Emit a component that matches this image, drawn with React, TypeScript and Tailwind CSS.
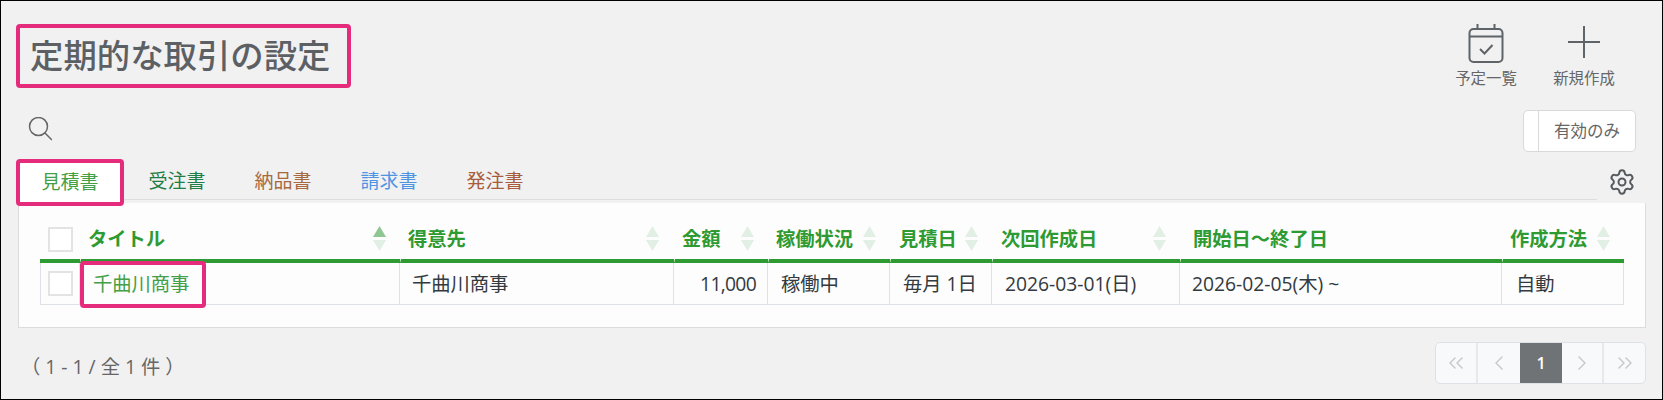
import { ChevronLeft, ChevronRight, ChevronsLeft, ChevronsRight, Settings } from "lucide-react";

const font = { fontFamily: '"Open Sans","Noto Sans CJK JP",sans-serif' };

function Sort({ active = false }: { active?: boolean }) {
  return (
    <svg width="13" height="25" viewBox="0 0 13 25" className="shrink-0">
      <polygon points="6.5,0 13,11 0,11" fill={active ? "#8fc793" : "#e2efe4"} />
      <polygon points="0,14 13,14 6.5,25" fill="#e2efe4" />
    </svg>
  );
}

const heads = [
  { t: "タイトル", w: 320, active: true, pl: 7, pr: 14, sort: true },
  { t: "得意先", w: 274, pl: 7, pr: 15, sort: true },
  { t: "金額", w: 94, pl: 7, pr: 14, sort: true },
  { t: "稼働状況", w: 122, pl: 7, pr: 14, sort: true },
  { t: "見積日", w: 102, pl: 8, pr: 14, sort: true },
  { t: "次回作成日", w: 188, pl: 8, pr: 14, sort: true },
  { t: "開始日〜終了日", w: 322, pl: 12, pr: 14, sort: false },
  { t: "作成方法", w: 122, pl: 7, pr: 14, sort: true },
];

const tabs = [
  { t: "受注書", c: "text-[#1f7d46]" },
  { t: "納品書", c: "text-[#a9693f]" },
  { t: "請求書", c: "text-[#4f94e3]" },
  { t: "発注書", c: "text-[#a65c3d]" },
];

const Cell = ({ children, className = "" }: { children: React.ReactNode; className?: string }) => (
  <td className={`h-[42px] border-b border-r border-[#dee2e6] p-0 pt-[2px] ${className}`}>{children}</td>
);

export default function App() {
  return (
    <div style={font} className="box-border flex h-[400px] w-[1663px] flex-col border border-black bg-[#f1f1f1] text-[16px]">
      <div className="flex h-[100px] items-start justify-between pl-[15px] pt-[23px]">
        <div className="box-border flex h-[64px] w-[335px] items-center rounded-[4px] border-4 border-[#e52b7b] pl-[10px] text-[33.4px] font-medium leading-none text-[#5c6064]">
          定期的な取引の設定
        </div>
        <div className="flex pr-[47px] text-[#666]">
          <button className="flex w-[62px] flex-col items-center whitespace-nowrap text-[15.4px] leading-[20px]">
            <svg width="36" height="40" viewBox="0 0 36 40" fill="none" stroke="#5f6468" strokeWidth="2" className="mb-[6px] mt-[-1px]">
              <rect x="1.5" y="6" width="33" height="33" rx="4" />
              <path d="M1.5 13.5H34.5M9.5 1V6M26.5 1V6" />
              <path d="M12 26l4.5 4.5L24.5 22" />
            </svg>
            予定一覧
          </button>
          <button className="ml-[36px] flex w-[62px] flex-col items-center whitespace-nowrap text-[15.4px] leading-[20px]">
            <svg width="34" height="40" viewBox="0 0 34 40" fill="none" stroke="#5f6468" strokeWidth="2" className="mb-[6px] mt-[-1px]">
              <path d="M17 3V35M1 19H33" />
            </svg>
            新規作成
          </button>
        </div>
      </div>
      <div className="flex h-[59px] items-start justify-between pl-[27px] pr-[26px]">
        <svg width="24" height="24" viewBox="0 0 24 24" fill="none" stroke="#666" strokeWidth="1.5" className="mt-[16px]">
          <circle cx="10.5" cy="9.5" r="9" />
          <path d="M17 16l7 7" />
        </svg>
        <div className="mt-[9px] flex h-[42px] w-[113px] rounded-[5px] border border-[#d9d9d9] bg-white text-[16.5px] text-[#666]">
          <span className="w-[15px] border-r border-[#d9d9d9]" />
          <span className="flex flex-1 items-center justify-center">有効のみ</span>
        </div>
      </div>
      <div className="flex h-[43px] items-start pl-[15px]">
        <div className="flex h-[40px] w-[1581px] items-start border-b border-[#dedede] text-[19px]">
          <div className="relative z-10 -mt-px box-border flex h-[47px] w-[108px] shrink-0 items-center justify-center rounded-[4px] border-4 border-[#e52b7b] bg-white text-[#43a047]">
            見積書
          </div>
          {tabs.map((x) => (
            <div key={x.t} className={`flex h-[42px] w-[106px] items-center justify-center ${x.c}`}>
              {x.t}
            </div>
          ))}
        </div>
        <Settings size={28} strokeWidth={1.7} className="ml-[11px] mt-[8px] text-[#555a5e]" />
      </div>
      <div className="ml-[17px] box-border h-[125px] w-[1628px] border-b border-l border-r border-[#dcdcdc] bg-[#fdfdfd] pl-[21px] pt-[23px] text-[19.3px]">
        <table className="w-[1584px] table-fixed border-separate border-spacing-0">
          <colgroup>
            <col className="w-[40px]" />
            {heads.map((h) => (
              <col key={h.t} style={{ width: h.w }} />
            ))}
          </colgroup>
          <thead>
            <tr>
              <th className="h-[37px] border-b-4 border-b-[#2e9a32] p-0 align-top">
                <span className="ml-[8px] mt-px block h-[25px] w-[25px] border-2 border-[#e3e3e3] bg-white" />
              </th>
              {heads.map((h) => (
                <th
                  key={h.t}
                  style={{ paddingLeft: h.pl, paddingRight: h.pr }}
                  className="h-[37px] border-b-4 border-l border-b-[#2e9a32] border-l-[#fdfdfd] p-0 align-top text-left font-bold text-[#2e9a32]"
                >
                  <div className="flex h-[25px] items-center justify-between whitespace-nowrap leading-none">
                    {h.t}
                    {h.sort && <Sort active={h.active} />}
                  </div>
                </th>
              ))}
            </tr>
          </thead>
          <tbody className="text-[#333a40]">
            <tr>
              <Cell className="border-l">
                <span className="-mt-[2px] ml-[7px] block h-[25px] w-[25px] border-2 border-[#e3e3e3] bg-white" />
              </Cell>
              <Cell className="relative pl-[13px]">
                <span className="text-[#43a047]">千曲川商事</span>
                <span className="absolute left-0 top-[-2px] h-[47px] w-[126px] rounded-[4px] border-4 border-[#e52b7b]" />
              </Cell>
              <Cell className="pl-[12px]">千曲川商事</Cell>
              <Cell className="pr-[11px] text-right tracking-[-0.7px]">11,000</Cell>
              <Cell className="pl-[13px]">稼働中</Cell>
              <Cell className="pl-[13px]">毎月 1日</Cell>
              <Cell className="pl-[13px]">2026-03-01(日)</Cell>
              <Cell className="pl-[12px]">2026-02-05(木) ~</Cell>
              <Cell className="pl-[14px]">自動</Cell>
            </tr>
          </tbody>
        </table>
      </div>
      <div className="flex flex-1 items-start justify-between pl-[20px] pr-[16px]">
        <span className="mt-[27px] text-[19.3px] leading-[24px] text-[#666]">（ 1 - 1 / 全 1 件 ）</span>
        <div className="mt-[14px] flex h-[42px] w-[211px] overflow-hidden rounded-[5px] border border-[#dee2e6] bg-[#f7f9fa] text-[#c3c8cc]">
          <span className="flex w-[42px] items-center justify-center border-r-2 border-[#e6e9ec]"><ChevronsLeft size={24} strokeWidth={1.4} /></span>
          <span className="flex w-[42px] items-center justify-center"><ChevronLeft size={24} strokeWidth={1.4} /></span>
          <span className="flex w-[42px] items-center justify-center bg-[#707376] text-[16px] font-semibold text-white">1</span>
          <span className="flex w-[42px] items-center justify-center border-r-2 border-[#e6e9ec]"><ChevronRight size={24} strokeWidth={1.4} /></span>
          <span className="flex flex-1 items-center justify-center"><ChevronsRight size={24} strokeWidth={1.4} /></span>
        </div>
      </div>
    </div>
  );
}
